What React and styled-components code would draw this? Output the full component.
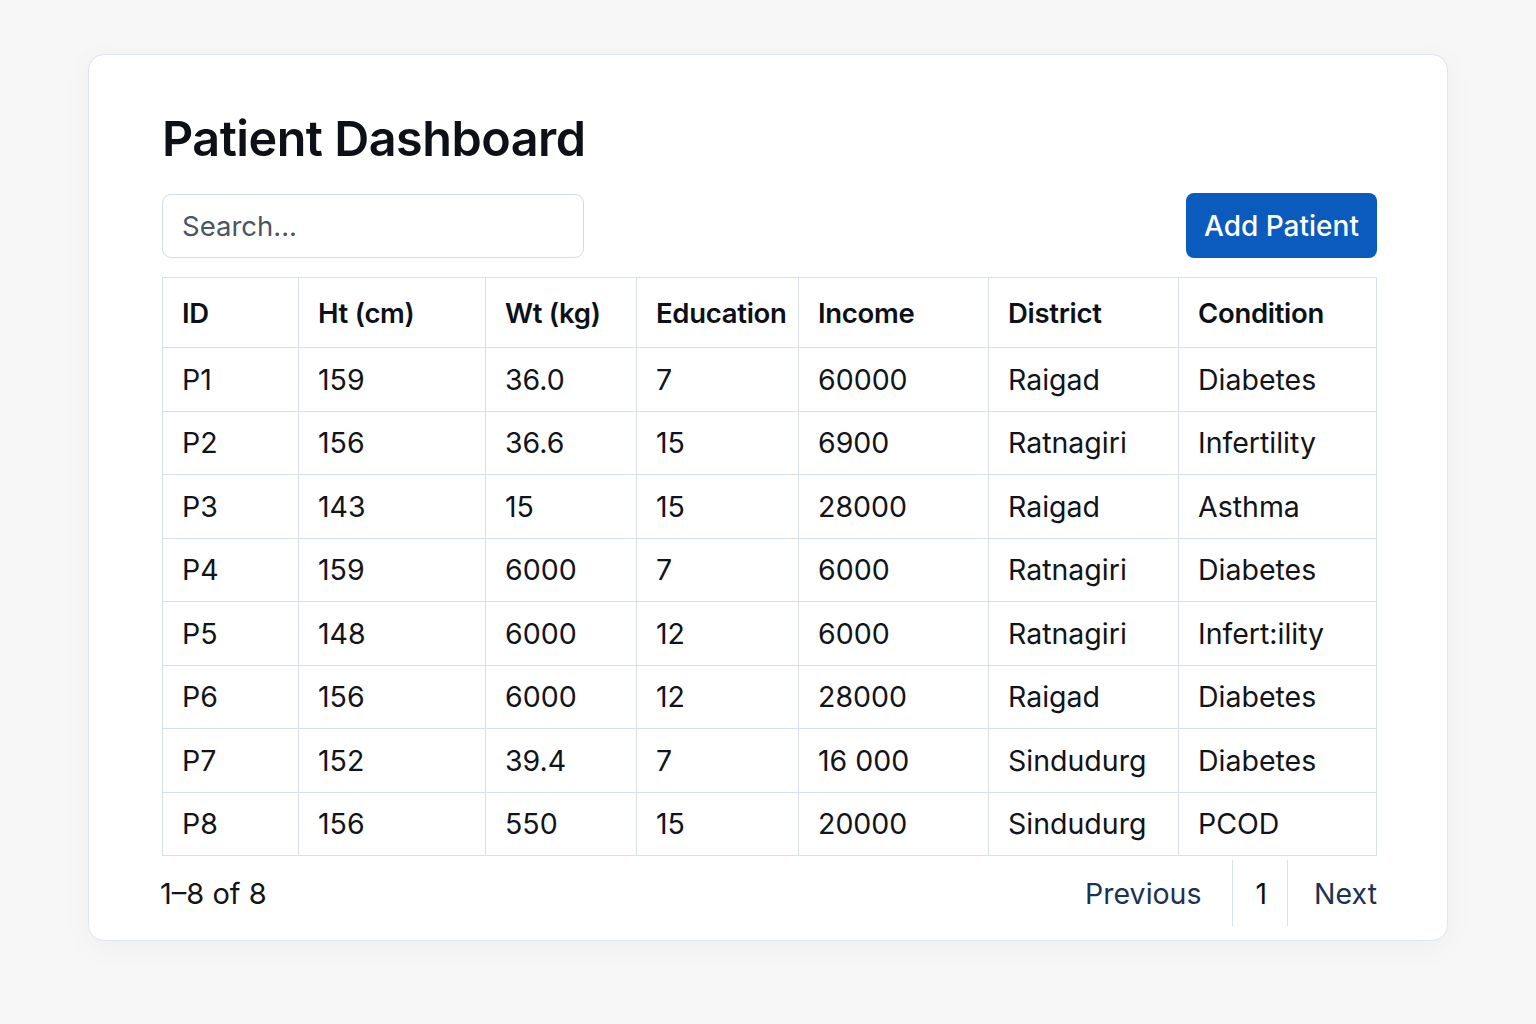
import React from 'react';
import styled, { createGlobalStyle } from 'styled-components';

const GlobalStyle = createGlobalStyle`
  body {
    margin: 0;
    background: #f7f7f8;
    font-family: Inter, "Noto Sans", sans-serif;
    color: #111418;
  }
`;

const Page = styled.div`
  min-height: 1024px;
  padding: 54px 88px 0 88px;
  box-sizing: border-box;
`;

const Card = styled.div`
  width: 1360px;
  box-sizing: border-box;
  background: #fff;
  border: 1px solid #dfe6ee;
  border-radius: 16px;
  box-shadow: 0 6px 30px rgba(0, 0, 0, 0.04);
  padding: 54px 70px 12px 73px;
`;

const Title = styled.h1`
  margin: 0 0 24px 0;
  font-size: 48.5px;
  font-weight: 600;
  line-height: 60px;
  letter-spacing: -0.5px;
  color: #0d1117;
`;

const Toolbar = styled.div`
  display: flex;
  justify-content: space-between;
  align-items: center;
  margin-bottom: 19px;
`;

const SearchInput = styled.input`
  width: 422px;
  height: 64px;
  box-sizing: border-box;
  border: 1px solid #cfdbe8;
  border-radius: 9px;
  padding: 0 19px;
  font-family: Inter, sans-serif;
  font-size: 27.5px;
  color: #1f2a37;
  outline: none;

  &::placeholder {
    color: #4a5565;
  }
`;

const AddButton = styled.button`
  height: 65px;
  width: 191px;
  border: none;
  border-radius: 8px;
  background: #0a5bbd;
  color: #fff;
  font-family: Inter, sans-serif;
  font-size: 28px;
  font-weight: 500;
  cursor: pointer;
`;

const Table = styled.table`
  width: 1214px;
  border-collapse: collapse;
  table-layout: fixed;
  font-size: 28.5px;
`;

const Th = styled.th`
  height: 69px;
  padding: 0 19px;
  text-align: left;
  font-size: 27.5px;
  font-weight: 600;
  letter-spacing: -0.3px;
  border: 1px solid #d6e0ea;
  color: #0d1117;
  white-space: nowrap;
`;

const Td = styled.td`
  height: 62.5px;
  padding: 0 19px;
  border: 1px solid #d6e0ea;
  color: #111418;
  white-space: nowrap;
`;

const Footer = styled.div`
  display: flex;
  justify-content: space-between;
  align-items: center;
  height: 70px;
  margin-top: 2px;
  font-size: 29px;
`;

const Range = styled.span`
  margin-left: -2px;
  color: #111418;
`;

const Pager = styled.div`
  display: flex;
  align-items: stretch;
  height: 66px;
  font-size: 28.5px;
`;

const PageLink = styled.span`
  display: flex;
  align-items: center;
  padding: ${p => p.$first ? '0 30px 0 0' : p.$last ? '0 0 0 26px' : '0 20px 0 23px'};
  color: ${p => p.$current ? '#0d1117' : '#1b3350'};
  border-left: ${p => p.$first ? 'none' : '1px solid #d9e1ea'};
`;

const columns = ['ID', 'Ht (cm)', 'Wt (kg)', 'Education', 'Income', 'District', 'Condition'];
const widths = [136, 187, 151, 162, 190, 190, 198];

const rows = [
  ['P1', '159', '36.0', '7', '60000', 'Raigad', 'Diabetes'],
  ['P2', '156', '36.6', '15', '6900', 'Ratnagiri', 'Infertility'],
  ['P3', '143', '15', '15', '28000', 'Raigad', 'Asthma'],
  ['P4', '159', '6000', '7', '6000', 'Ratnagiri', 'Diabetes'],
  ['P5', '148', '6000', '12', '6000', 'Ratnagiri', 'Infert:ility'],
  ['P6', '156', '6000', '12', '28000', 'Raigad', 'Diabetes'],
  ['P7', '152', '39.4', '7', '16 000', 'Sindudurg', 'Diabetes'],
  ['P8', '156', '550', '15', '20000', 'Sindudurg', 'PCOD'],
];

export default function App() {
  return (
    <Page>
      <GlobalStyle />
      <Card>
        <Title>Patient Dashboard</Title>
        <Toolbar>
          <SearchInput placeholder="Search..." />
          <AddButton>Add Patient</AddButton>
        </Toolbar>
        <Table>
          <colgroup>
            {widths.map((w, i) => <col key={i} style={{ width: w }} />)}
          </colgroup>
          <thead>
            <tr>
              {columns.map(c => <Th key={c}>{c}</Th>)}
            </tr>
          </thead>
          <tbody>
            {rows.map(r => (
              <tr key={r[0]}>
                {r.map((v, i) => <Td key={i}>{v}</Td>)}
              </tr>
            ))}
          </tbody>
        </Table>
        <Footer>
          <Range>1–8 of 8</Range>
          <Pager>
            <PageLink $first>Previous</PageLink>
            <PageLink $current>1</PageLink>
            <PageLink $last>Next</PageLink>
          </Pager>
        </Footer>
      </Card>
    </Page>
  );
}
